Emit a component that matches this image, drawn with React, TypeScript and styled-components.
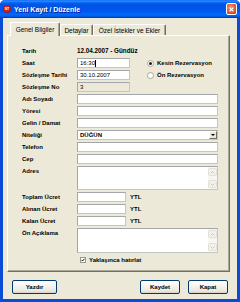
import React from 'react';
import styled, { createGlobalStyle } from 'styled-components';

const GlobalStyle = createGlobalStyle`
  html, body {
    margin: 0;
    padding: 0;
    background: #ffffff;
  }
  body {
    font-family: "Liberation Sans", Arial, sans-serif;
    color: #000;
  }
`;

const Window = styled.div`
  width: 240px;
  height: 302px;
  box-sizing: border-box;
  display: flex;
  flex-direction: column;
  background: #0a4cd6;
  border-radius: 5px 5px 0 0;
  overflow: hidden;
`;

const TitleBar = styled.div`
  height: 18px;
  flex: none;
  display: flex;
  align-items: center;
  padding: 0 3px;
  background: linear-gradient(
    to bottom,
    #0058ee 0%,
    #3593ff 5%,
    #127dff 10%,
    #0262ee 16%,
    #0054e3 26%,
    #0055eb 56%,
    #005bf5 68%,
    #026afe 78%,
    #0062ef 88%,
    #0052d6 94%,
    #003092 100%
  );
`;

const Title = styled.span`
  flex: 1;
  margin-left: 3px;
  color: #fff;
  font-weight: bold;
  font-size: 7px;
  text-shadow: 1px 1px 0 #0a1e8c;
  white-space: nowrap;
`;

const CloseButton = styled.div`
  width: 9px;
  height: 10px;
  border: 1px solid #fff;
  border-radius: 2px;
  background: radial-gradient(circle at 40% 35%, #f0967a 0%, #e05a35 55%, #c2401c 100%);
  display: flex;
  align-items: center;
  justify-content: center;
`;

const Client = styled.div`
  flex: 1;
  margin: 0 3px 3px;
  background: #ece9d8;
  padding: 4px 7px 0 4px;
  display: flex;
  flex-direction: column;
`;

const TabStrip = styled.div`
  display: flex;
  align-items: flex-end;
  height: 13px;
  padding-left: 3px;
  position: relative;
  z-index: 1;
`;

const Tab = styled.div<{ $w: number; $active?: boolean }>`
  width: ${(p) => p.$w}px;
  height: ${(p) => (p.$active ? 14 : 11)}px;
  margin-bottom: ${(p) => (p.$active ? -1 : 0)}px;
  box-sizing: border-box;
  border-top: 1px solid #ffffff;
  border-left: 1px solid #ffffff;
  border-right: 1px solid #716f64;
  box-shadow: inset -1px 0 0 #aca899;
  border-radius: 2px 2px 0 0;
  background: #ece9d8;
  font-size: 6.5px;
  display: flex;
  align-items: center;
  justify-content: center;
  white-space: nowrap;
`;

const Panel = styled.div`
  height: 237px;
  box-sizing: border-box;
  border-top: 1px solid #ffffff;
  border-left: 1px solid #ffffff;
  border-right: 1px solid #716f64;
  border-bottom: 1px solid #716f64;
  box-shadow: inset -1px -1px 0 #aca899;
  padding: 9px 11px 0 14px;
  display: flex;
  flex-direction: column;
`;

const Row = styled.div<{ $h?: number }>`
  display: grid;
  grid-template-columns: 55px 1fr;
  height: ${(p) => p.$h ?? 12}px;
  align-items: start;
`;

const Label = styled.div`
  font-weight: bold;
  font-size: 6px;
  line-height: 12px;
  white-space: nowrap;
`;

const Value = styled.div`
  font-weight: bold;
  font-size: 6.3px;
  line-height: 12px;
  white-space: nowrap;
`;

const Inline = styled.div`
  display: flex;
  align-items: flex-start;
`;

const Field = styled.div<{ $w?: number; $h?: number; $disabled?: boolean }>`
  width: ${(p) => (p.$w ? `${p.$w}px` : '100%')};
  height: ${(p) => p.$h ?? 10}px;
  margin-top: 1px;
  box-sizing: border-box;
  border: 1px solid #c4c6c4;
  border-top-color: #a3a7aa;
  border-left-color: #a3a7aa;
  background: ${(p) => (p.$disabled ? '#ece9d8' : '#ffffff')};
  font-size: 6px;
  line-height: 8px;
  padding-left: 2px;
  display: flex;
  align-items: flex-start;
  white-space: nowrap;
  flex: none;
`;

const Caret = styled.span`
  display: inline-block;
  width: 1px;
  height: 7px;
  margin-top: 0.5px;
  background: #000;
`;

const FieldText = styled.span<{ $bold?: boolean }>`
  flex: 1;
  font-weight: ${(p) => (p.$bold ? 'bold' : 'normal')};
`;

const DropButton = styled.div`
  width: 8px;
  height: 8px;
  box-sizing: border-box;
  background: #ece9d8;
  border: 1px solid #fff;
  border-right-color: #716f64;
  border-bottom-color: #716f64;
  display: flex;
  align-items: center;
  justify-content: center;
`;

const ScrollBar = styled.div`
  width: 9px;
  height: 100%;
  background: #f7f6f1;
  display: flex;
  flex-direction: column;
  justify-content: space-between;
  padding: 1px 0;
  box-sizing: border-box;
`;

const ScrollArrow = styled.div`
  width: 9px;
  height: 8px;
  box-sizing: border-box;
  border: 1px solid #e3e0d6;
  border-radius: 2px;
  background: #f3f2ec;
  display: flex;
  align-items: center;
  justify-content: center;
`;

const RadioItem = styled.div<{ $offset?: number }>`
  display: flex;
  align-items: center;
  height: 12px;
  margin-left: ${(p) => p.$offset ?? 0}px;
  font-weight: bold;
  font-size: 6px;
  white-space: nowrap;
`;

const Radio = styled.span<{ $on?: boolean }>`
  width: 7px;
  height: 7px;
  box-sizing: border-box;
  border-radius: 50%;
  border: 1px solid #a8a69e;
  background: #fff;
  margin-right: 3px;
  display: flex;
  align-items: center;
  justify-content: center;
  &::after {
    content: '';
    width: 3px;
    height: 3px;
    border-radius: 50%;
    background: ${(p) => (p.$on ? '#222' : 'transparent')};
  }
`;

const Unit = styled.span`
  font-weight: bold;
  font-size: 6px;
  line-height: 12px;
  margin-left: 4px;
`;

const CheckRow = styled.div`
  display: flex;
  align-items: center;
  height: 14px;
  margin-left: 58px;
  font-weight: bold;
  font-size: 6px;
`;

const CheckBox = styled.span`
  width: 6px;
  height: 6px;
  box-sizing: border-box;
  border: 1px solid #9a988f;
  background: #fff;
  margin-right: 3px;
  display: flex;
  align-items: center;
  justify-content: center;
`;

const ButtonRow = styled.div`
  display: flex;
  align-items: center;
  margin: 8px 2px 0 5px;
  gap: 8px;
`;

const Spacer = styled.div`
  flex: 1;
`;

const Button = styled.button<{ $w: number }>`
  width: ${(p) => p.$w}px;
  height: 14px;
  padding: 0;
  box-sizing: border-box;
  border: 1px solid #003c74;
  border-radius: 2px;
  background: linear-gradient(to bottom, #ffffff 0%, #f4f3ee 45%, #e9e7de 85%, #d6d0c5 100%);
  font-family: "Liberation Sans", Arial, sans-serif;
  font-weight: bold;
  font-size: 6px;
  color: #000;
`;

const ChevronUp = () => (
  <svg width="5" height="3" viewBox="0 0 5 3">
    <path d="M0.5 2.5 L2.5 0.5 L4.5 2.5" fill="none" stroke="#c9c7ba" strokeWidth="1" />
  </svg>
);

const ChevronDown = () => (
  <svg width="5" height="3" viewBox="0 0 5 3">
    <path d="M0.5 0.5 L2.5 2.5 L4.5 0.5" fill="none" stroke="#c9c7ba" strokeWidth="1" />
  </svg>
);

const TextArea: React.FC<{ h: number }> = ({ h }) => (
  <Field $h={h} style={{ padding: 0, justifyContent: 'flex-end' }}>
    <ScrollBar>
      <ScrollArrow>
        <ChevronUp />
      </ScrollArrow>
      <ScrollArrow>
        <ChevronDown />
      </ScrollArrow>
    </ScrollBar>
  </Field>
);

const App: React.FC = () => (
  <>
    <GlobalStyle />
    <Window>
      <TitleBar>
        <svg width="8" height="8" viewBox="0 0 8 8">
          <circle cx="4" cy="4" r="3.7" fill="#d6201c" stroke="#8a1010" strokeWidth="0.5" />
          <text x="4" y="5.3" fontSize="3.6" fontWeight="bold" fill="#fff" textAnchor="middle" fontFamily="Liberation Sans">
            ST
          </text>
        </svg>
        <Title>Yeni Kayıt / Düzenle</Title>
        <CloseButton>
          <svg width="5" height="5" viewBox="0 0 5 5">
            <path d="M0.6 0.6 L4.4 4.4 M4.4 0.6 L0.6 4.4" stroke="#fff" strokeWidth="1.2" />
          </svg>
        </CloseButton>
      </TitleBar>
      <Client>
        <TabStrip>
          <Tab $w={50} $active>
            Genel Bilgiler
          </Tab>
          <Tab $w={33}>Detaylar</Tab>
          <Tab $w={73}>Özel İstekler ve Ekler</Tab>
        </TabStrip>
        <Panel>
          <Row>
            <Label>Tarih</Label>
            <Value>12.04.2007 - Gündüz</Value>
          </Row>
          <Row>
            <Label>Saat</Label>
            <Inline>
              <Field $w={53}>
                16:30
                <Caret />
              </Field>
              <RadioItem $offset={17}>
                <Radio $on />
                Kesin Rezervasyon
              </RadioItem>
            </Inline>
          </Row>
          <Row>
            <Label>Sözleşme Tarihi</Label>
            <Inline>
              <Field $w={53}>30.10.2007</Field>
              <RadioItem $offset={17}>
                <Radio />
                Ön Rezervasyon
              </RadioItem>
            </Inline>
          </Row>
          <Row>
            <Label>Sözleşme No</Label>
            <Field $w={53} $disabled>
              3
            </Field>
          </Row>
          <Row>
            <Label>Adı Soyadı</Label>
            <Field />
          </Row>
          <Row>
            <Label>Yöresi</Label>
            <Field />
          </Row>
          <Row>
            <Label>Gelin / Damat</Label>
            <Field />
          </Row>
          <Row>
            <Label>Niteliği</Label>
            <Field>
              <FieldText $bold>DÜĞÜN</FieldText>
              <DropButton>
                <svg width="4" height="2" viewBox="0 0 4 2">
                  <path d="M0 0 H4 L2 2 Z" fill="#000" />
                </svg>
              </DropButton>
            </Field>
          </Row>
          <Row>
            <Label>Telefon</Label>
            <Field />
          </Row>
          <Row>
            <Label>Cep</Label>
            <Field />
          </Row>
          <Row $h={26}>
            <Label>Adres</Label>
            <TextArea h={24} />
          </Row>
          <Row>
            <Label>Toplam Ücret</Label>
            <Inline>
              <Field $w={49} />
              <Unit>YTL</Unit>
            </Inline>
          </Row>
          <Row>
            <Label>Alınan Ücret</Label>
            <Inline>
              <Field $w={49} />
              <Unit>YTL</Unit>
            </Inline>
          </Row>
          <Row>
            <Label>Kalan Ücret</Label>
            <Inline>
              <Field $w={49} />
              <Unit>YTL</Unit>
            </Inline>
          </Row>
          <Row $h={26}>
            <Label>Ön Açıklama</Label>
            <TextArea h={25} />
          </Row>
          <CheckRow>
            <CheckBox>
              <svg width="4" height="4" viewBox="0 0 4 4">
                <path d="M0.4 1.9 L1.5 3 L3.6 0.7" fill="none" stroke="#000" strokeWidth="0.9" />
              </svg>
            </CheckBox>
            Yaklaşınca hatırlat
          </CheckRow>
        </Panel>
        <ButtonRow>
          <Button $w={45}>Yazdır</Button>
          <Spacer />
          <Button $w={40}>Kaydet</Button>
          <Button $w={40}>Kapat</Button>
        </ButtonRow>
      </Client>
    </Window>
  </>
);

export default App;
